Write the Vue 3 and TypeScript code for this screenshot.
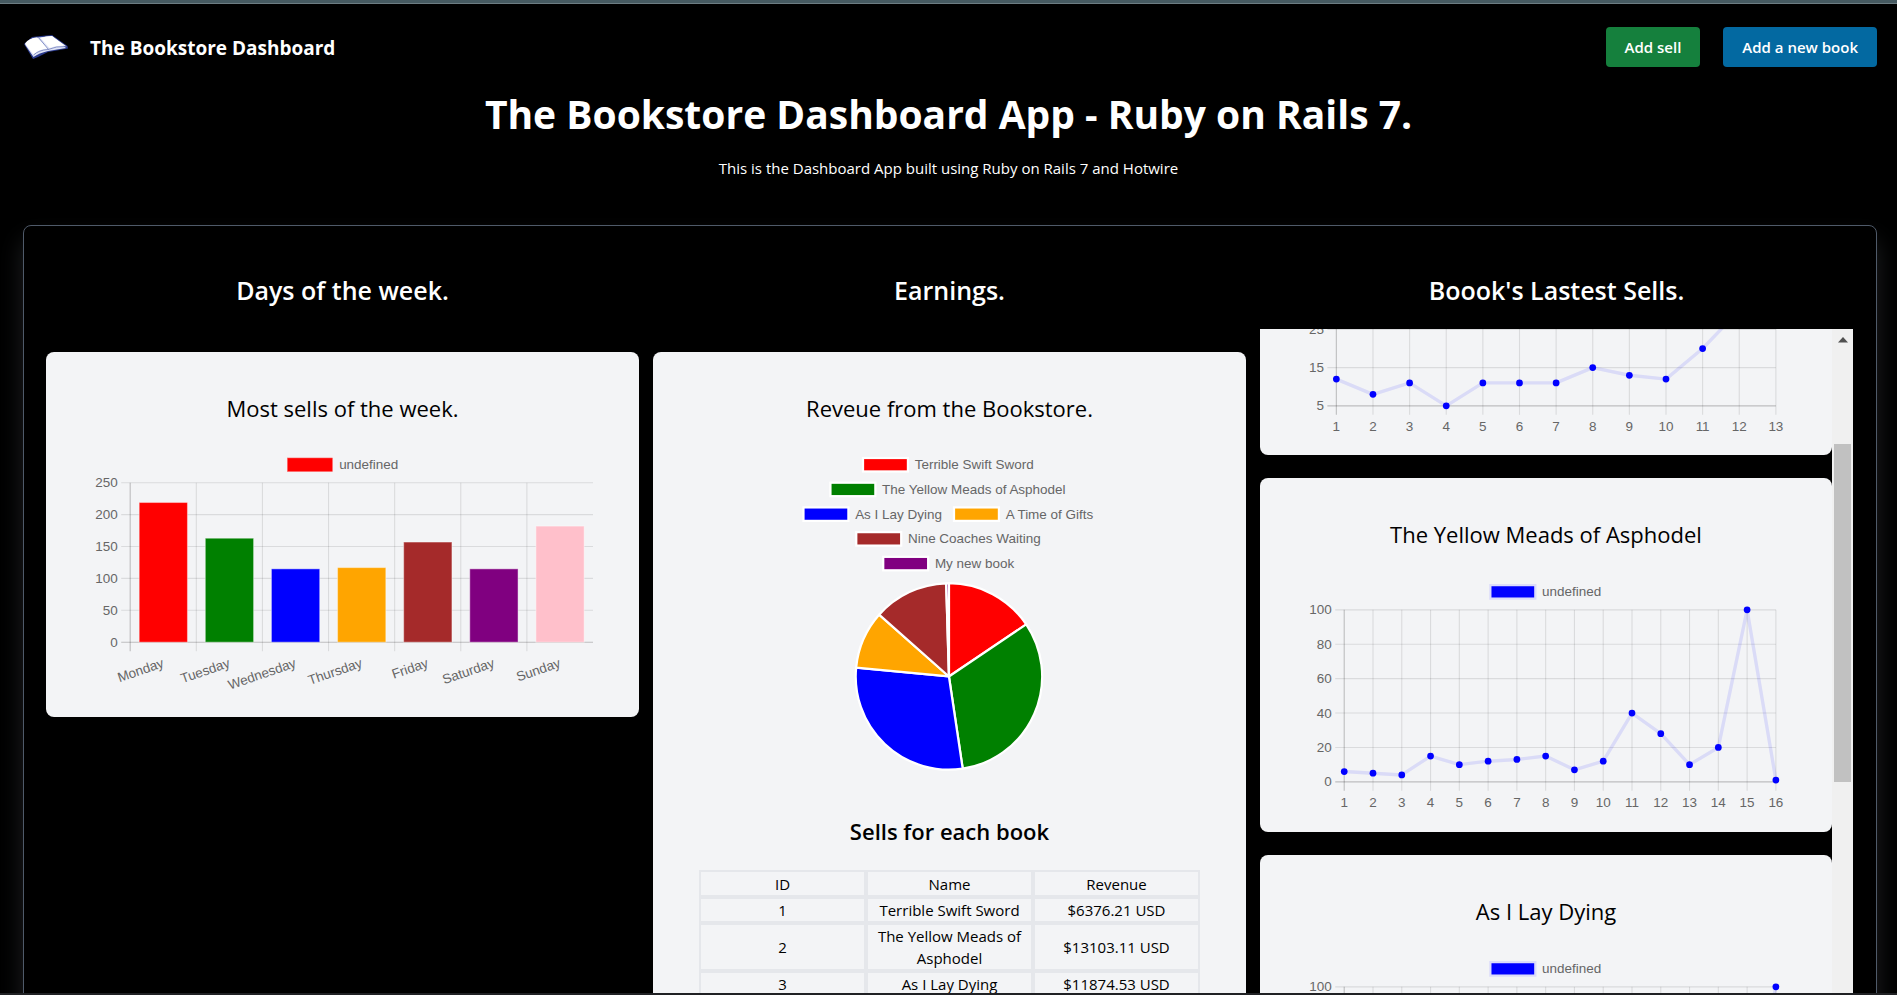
<script setup lang="ts">
import { onMounted, ref } from 'vue'

interface Point { x: number; y: number }
interface LineChart {
  title: string
  left: number
  min: number
  max: number
  ticks: number[]
  values: number[]
}

const days = [
  { name: 'Monday', value: 219, color: 'red' },
  { name: 'Tuesday', value: 163, color: 'green' },
  { name: 'Wednesday', value: 115, color: 'blue' },
  { name: 'Thursday', value: 117, color: 'orange' },
  { name: 'Friday', value: 157, color: 'brown' },
  { name: 'Saturday', value: 115, color: 'purple' },
  { name: 'Sunday', value: 182, color: 'pink' },
]
const dayTicks = [0, 50, 100, 150, 200, 250]
const dayStep = 412 / 7
const dayX = (i: number) => 34 + i * dayStep
const dayY = (v: number) => 172 - v * 0.568

const legend = [
  { name: 'Terrible Swift Sword', color: 'red', x: 146, row: 0 },
  { name: 'The Yellow Meads of Asphodel', color: 'green', x: 117, row: 1 },
  { name: 'As I Lay Dying', color: 'blue', x: 93, row: 2 },
  { name: 'A Time of Gifts', color: 'orange', x: 227, row: 2 },
  { name: 'Nine Coaches Waiting', color: 'brown', x: 140, row: 3 },
  { name: 'My new book', color: 'purple', x: 164, row: 4 },
]

const shares = [
  { color: 'red', from: 0, to: 56 },
  { color: 'green', from: 56, to: 171.5 },
  { color: 'blue', from: 171.5, to: 275.5 },
  { color: 'orange', from: 275.5, to: 311.5 },
  { color: 'brown', from: 311.5, to: 358.3 },
  { color: 'purple', from: 358.3, to: 360 },
]
const rim = (deg: number): Point => {
  const a = (deg * Math.PI) / 180
  return { x: 222.5 + 83 * Math.sin(a), y: 202.5 - 83 * Math.cos(a) }
}
const slice = (from: number, to: number) => {
  const a = rim(from)
  const b = rim(to)
  return `M222.5 202.5L${a.x} ${a.y}A83 83 0 ${to - from > 180 ? 1 : 0} 1 ${b.x} ${b.y}Z`
}

const rows = [
  { id: 1, name: 'Terrible Swift Sword', revenue: '$6376.21 USD' },
  { id: 2, name: 'The Yellow Meads of Asphodel', revenue: '$13103.11 USD' },
  { id: 3, name: 'As I Lay Dying', revenue: '$11874.53 USD' },
]

const charts: LineChart[] = [
  { title: 'Terrible Swift Sword', left: 27, min: 5, max: 50, ticks: [5, 15, 25, 35, 45], values: [12, 8, 11, 5, 11, 11, 11, 15, 13, 12, 20, 30, 50] },
  { title: 'The Yellow Meads of Asphodel', left: 34, min: 0, max: 100, ticks: [0, 20, 40, 60, 80, 100], values: [6, 5, 4, 15, 10, 12, 13, 15, 7, 12, 40, 28, 10, 20, 100, 1] },
  { title: 'As I Lay Dying', left: 34, min: 0, max: 100, ticks: [0, 20, 40, 60, 80, 100], values: [8, 6, 9, 12, 10, 14, 11, 9, 13, 16, 12, 18, 15, 20, 24, 100] },
]
const lineX = (c: LineChart, i: number) => c.left + (i * (418 - c.left)) / (c.values.length - 1)
const lineY = (c: LineChart, v: number) => 184 - ((v - c.min) / (c.max - c.min)) * 153
const linePoints = (c: LineChart) => c.values.map((v, i) => `${lineX(c, i)},${lineY(c, v)}`).join(' ')

const list = ref<HTMLElement | null>(null)
onMounted(() => {
  if (list.value) list.value.scrollTop = 227
})
</script>

<template>
  <div class="page">
    <div class="topline"></div>
    <div class="view">
      <header class="bar">
        <a class="brand" href="#">
          <svg class="logo" viewBox="0 0 44 24" aria-hidden="true">
            <path d="M0 9 9 24 14 22 24 17 30 16 44 13.500 43.500 11 28 0 17 1 8 2Z" fill="#2b3a8c" />
            <path d="M1 9.500 9.500 22Q15 18 24 16L42 13 28 1 9 3Z" fill="#dfe3f6" />
            <path d="M1 8.500Q5 3 13 2.500L24 13.500Q15 14 9.500 19.500Z" fill="#fff" />
            <path d="M16.500 3Q22 1 28 1L42 11Q33 10 25.500 13Z" fill="#fff" />
            <path d="M14.500 2.500 24.500 14.500M9.500 20Q15 15 24 14.500Q32 11 42.500 11.500" fill="none" stroke="#6f7cba" stroke-width=".8" />
          </svg>
          <span>The Bookstore Dashboard</span>
        </a>
        <nav class="actions">
          <button class="btn green" type="button">Add sell</button>
          <button class="btn blue" type="button">Add a new book</button>
        </nav>
      </header>

      <h1>The Bookstore Dashboard App - Ruby on Rails 7.</h1>
      <p class="lead">This is the Dashboard App built using Ruby on Rails 7 and Hotwire</p>

      <main class="panel">
        <section class="column">
          <h2>Days of the week.</h2>
          <article class="card">
            <h3>Most sells of the week.</h3>
            <svg class="chart" viewBox="0 0 446 223" role="img" aria-label="Sells by day">
              <rect x="174" y="8" width="40" height="12" fill="red" stroke="#ff5c5c" stroke-width=".5" />
              <text x="220" y="18">undefined</text>
              <g v-for="t in dayTicks" :key="t">
                <line class="grid" :class="{ axis: t === 0 }" x1="26" x2="446" :y1="dayY(t)" :y2="dayY(t)" />
                <text x="23" :y="dayY(t) + 4" text-anchor="end">{{ t }}</text>
              </g>
              <line v-for="(d, i) in days" :key="d.name" class="grid" :class="{ axis: i === 0 }" :x1="dayX(i)" :x2="dayX(i)" y1="30" y2="180" />
              <g v-for="(d, i) in days" :key="d.name">
                <rect class="day" :x="dayX(i) + 8" :y="dayY(d.value)" width="43" :height="172 - dayY(d.value)" :fill="d.color" />
                <text :transform="`translate(${dayX(i) + dayStep / 2} 190) rotate(-19)`" y="4" text-anchor="end">{{ d.name }}</text>
              </g>
            </svg>
          </article>
        </section>

        <section class="column">
          <h2>Earnings.</h2>
          <article class="card">
            <h3>Reveue from the Bookstore.</h3>
            <svg class="chart" viewBox="0 0 446 286" role="img" aria-label="Revenue by book">
              <g v-for="l in legend" :key="l.name">
                <rect :x="l.x" :y="8 + l.row * 22" width="40" height="12" :fill="l.color" stroke="#fff" stroke-width="2" />
                <text :x="l.x + 46" :y="18 + l.row * 22">{{ l.name }}</text>
              </g>
              <path v-for="s in shares" :key="s.color" :d="slice(s.from, s.to)" :fill="s.color" stroke="#fff" stroke-width="2" stroke-linejoin="round" />
            </svg>
            <h4>Sells for each book</h4>
            <table>
              <thead>
                <tr><th>ID</th><th>Name</th><th>Revenue</th></tr>
              </thead>
              <tbody>
                <tr v-for="r in rows" :key="r.id">
                  <td>{{ r.id }}</td><td>{{ r.name }}</td><td>{{ r.revenue }}</td>
                </tr>
              </tbody>
            </table>
          </article>
        </section>

        <section class="column">
          <h2>Boook's Lastest Sells.</h2>
          <div class="scroller">
            <div ref="list" class="list">
              <article v-for="c in charts" :key="c.title" class="card">
                <h3>{{ c.title }}</h3>
                <svg class="chart" viewBox="0 0 427 213" role="img" :aria-label="c.title">
                  <rect x="164" y="9" width="40" height="12" fill="blue" stroke="#dcdcfa" stroke-width="2" />
                  <text x="210" y="19">undefined</text>
                  <g v-for="(t, i) in c.ticks" :key="t">
                    <line class="grid" :class="{ axis: i === 0 }" :x1="c.left - 8" x2="418" :y1="lineY(c, t)" :y2="lineY(c, t)" />
                    <text :x="c.left - 11" :y="lineY(c, t) + 4" text-anchor="end">{{ t }}</text>
                  </g>
                  <g v-for="(v, i) in c.values" :key="i">
                    <line class="grid" :class="{ axis: i === 0 }" :x1="lineX(c, i)" :x2="lineX(c, i)" y1="31" y2="192" />
                    <text :x="lineX(c, i)" y="206" text-anchor="middle">{{ i + 1 }}</text>
                  </g>
                  <polyline class="trend" :points="linePoints(c)" />
                  <circle v-for="(v, i) in c.values" :key="i" :cx="lineX(c, i)" :cy="lineY(c, v)" r="3" fill="blue" />
                </svg>
              </article>
            </div>
            <div class="track" aria-hidden="true">
              <svg class="arrow" viewBox="0 0 10 6"><path d="M0 5.500 5 0l5 5.500Z" fill="#505050" /></svg>
              <div class="thumb"></div>
            </div>
          </div>
        </section>
      </main>
    </div>
    <div class="bottomline"></div>
  </div>
</template>

<style>
body { margin: 0; background: #000; }
</style>

<style scoped>
.page {
  display: flex;
  flex-direction: column;
  height: 100vh;
  overflow: hidden;
  background: #000;
  color: #fff;
  font-family: "Segoe UI", "Open Sans", "Noto Sans", sans-serif;
}
.page * { box-sizing: border-box; }
.topline { flex: none; height: 4px; background: #465a61; border-bottom: 1px solid #6d7d83; }
.bottomline { flex: none; height: 2px; background: #202124; }
.view { flex: 1; min-height: 0; overflow: hidden; }
.bar { display: flex; align-items: center; justify-content: space-between; height: 86px; padding: 0 20px 0 24px; }
.brand { display: flex; align-items: center; gap: 22px; color: #fff; text-decoration: none; font-size: 19px; font-weight: 700; line-height: 28px; }
.brand span { padding-top: 2px; }
.logo { width: 44px; height: 24px; }
.actions { display: flex; gap: 23px; }
.btn { height: 40px; padding: 0 19px; border: 0; border-radius: 4px; color: #fff; font: 600 15px/24px "Segoe UI", "Open Sans", sans-serif; }
.green { background: #15803d; }
.blue { background: #0369a1; }
h1 { margin: 0; text-align: center; font-size: 39px; font-weight: 700; line-height: 48px; }
.lead { margin: 18px 0 45px; text-align: center; font-size: 15px; line-height: 24px; }
.panel {
  display: grid;
  grid-template-columns: repeat(3, minmax(0, 1fr));
  gap: 14px;
  align-items: start;
  margin: 0 20px 0 23px;
  padding: 46px 23px 45px 22px;
  border: 1px solid #4f5a69;
  border-radius: 8px;
  box-shadow: 0 15px 25px 0 rgba(156, 163, 175, .2);
}
h2 { margin: 0 0 21px; text-align: center; font-size: 25px; font-weight: 600; line-height: 36px; }
.column > .card { margin-top: 44px; }
.card { flex: none; padding: 40px 46px 17px; border-radius: 8px; background: #f3f4f6; color: #000; }
h3 { margin: 0 0 25px; text-align: center; font-size: 22px; font-weight: 500; line-height: 32px; }
h4 { margin: 45px 0 23px; text-align: center; font-size: 22px; font-weight: 600; line-height: 32px; }
.chart { display: block; width: 100%; height: auto; overflow: visible; }
.chart text { fill: #666; font: 12px "Liberation Sans", Arial, sans-serif; }
.grid { stroke: rgba(0, 0, 0, .1); stroke-width: 1; }
.axis { stroke: rgba(0, 0, 0, .22); }
.day { stroke: rgba(255, 255, 255, .4); stroke-width: 1; }
.trend { fill: none; stroke: rgba(0, 0, 255, .1); stroke-width: 3; stroke-linejoin: round; }
table { width: 100%; table-layout: fixed; border-collapse: separate; border-spacing: 0; border: 0; font-size: 15px; line-height: 22px; text-align: center; }
th, td { padding: 0; border: 2px solid #e5e7eb; font-weight: 500; }
th { height: 27px; }
.scroller { display: flex; height: 800px; }
.list { flex: 1; display: flex; flex-direction: column; gap: 23px; overflow-y: scroll; scrollbar-width: none; }
.track { flex: none; display: flex; flex-direction: column; align-items: center; width: 21px; background: #f0f0f0; }
.arrow { width: 10px; height: 6px; margin: 8px 0 101px; }
.thumb { width: 17px; height: 338px; background: #c1c1c1; }
</style>
